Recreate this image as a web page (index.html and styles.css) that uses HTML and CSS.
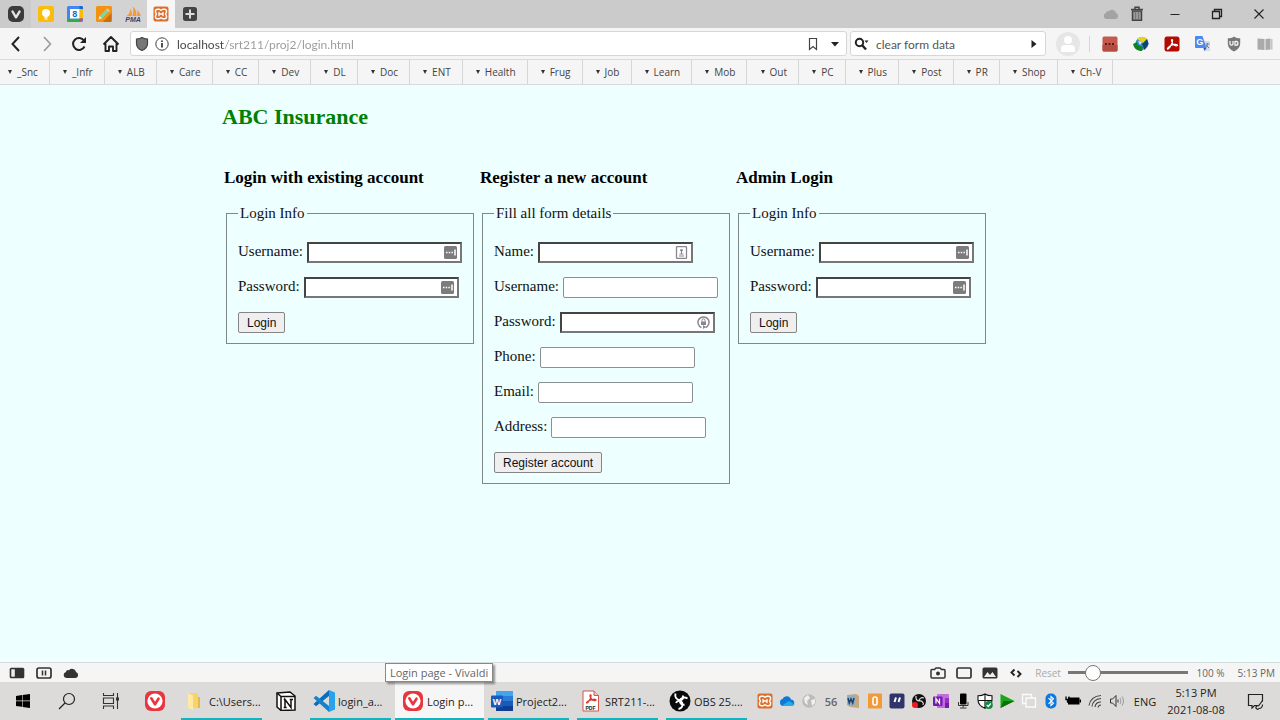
FILE: index.html
```html
<!DOCTYPE html>
<html lang="en">
  <head>
    <meta charset="UTF-8">
    <meta name="viewport" content="width=device-width, initial-scale=1.0">
    <title>Login page - Vivaldi</title>
    <link rel="stylesheet" href="styles.css">
  </head>
  <body>
    <svg class="sprite" aria-hidden="true">
      <symbol id="xampp" viewBox="0 0 16 16">
        <rect x="0.5" y="0.5" width="15" height="15" rx="2" fill="#dd6f2c"/>
        <path d="M4.500 3.200h1.500c1.200 0 1 1 2 1s.8-1 2-1h1.500c1.300 0 2 .8 2 2v1c0 .9-.9.900-.9 1.800s.9.900.9 1.800v1c0 1.200-.7 2-2 2H10c-1.200 0-1-1-2-1s-.8 1-2 1H4.500c-1.300 0-2-.8-2-2v-1c0-.9.900-.9.900-1.800s-.9-.9-.9-1.800v-1c0-1.200.7-2 2-2z" fill="none" stroke="#fff" stroke-width="1.400"/>
        <path d="M6 6.300v3.400M10 6.300v3.400M6 8h4" fill="none" stroke="#fff" stroke-width="1.300" stroke-linecap="round"/>
      </symbol>
      <symbol id="vivaldi" viewBox="0 0 22 22">
        <rect x="1" y="1" width="20" height="20" rx="6" fill="#e8363f"/>
        <circle cx="11" cy="11" r="7.600" fill="#fff"/>
        <path d="M7.300 8.300l3.700 6 3.500-5.600" fill="none" stroke="#e8363f" stroke-width="2.600" stroke-linecap="round" stroke-linejoin="round"/>
      </symbol>
      <symbol id="fill-dots" viewBox="0 0 13 13">
        <rect width="13" height="13" rx="1.500" fill="#7c7c7e"/>
        <path d="M2 6.500h1.500M4.700 6.500h1.500M7.400 6.500h1.500M11 3.500v6" stroke="#fff" stroke-width="1.500"/>
      </symbol>
      <symbol id="cloud" viewBox="0 0 16 12">
        <path d="M3.500 11a3 3 0 0 1-.6-5.900A2.500 2.500 0 0 1 6 3.200 4 4 0 0 1 13 5a3.100 3.100 0 0 1-.5 6z" fill="currentColor"/>
      </symbol>
    </svg>

    <header class="browser">
      <div class="tabbar">
        <button class="tab menu" aria-label="Vivaldi menu">
          <svg width="18" height="18" viewBox="0 0 18 18"><rect x="1" y="1" width="16" height="16" rx="5" fill="#3b3b3b"/><path d="M5.500 6.500L9 12.300l3.500-5.700" fill="none" stroke="#e4e4e4" stroke-width="2.400" stroke-linecap="round" stroke-linejoin="round"/></svg>
        </button>
        <button class="tab" aria-label="Keep">
          <svg width="16" height="16" viewBox="0 0 16 16"><rect width="16" height="16" rx="2" fill="#fbbc0a"/><circle cx="8" cy="7" r="4" fill="#fff"/><path d="M6.500 11.700h3M6.500 13h3" stroke="#fff"/></svg>
        </button>
        <button class="tab" aria-label="Calendar">
          <svg width="16" height="16" viewBox="0 0 16 16"><rect width="16" height="16" rx="1.500" fill="#4285f4"/><path d="M12.500 3H16v9.500h-3.500z" fill="#fbbc04"/><path d="M0 12.500h12.500V16H1.500A1.500 1.500 0 0 1 0 14.500z" fill="#34a853"/><path d="M12.500 12.500H16L12.500 16z" fill="#ea4335"/><path d="M12.500 0h2A1.500 1.500 0 0 1 16 1.500V3h-3.500z" fill="#1967d2"/><rect x="3" y="3" width="9.500" height="9.500" fill="#fff"/><text x="7.800" y="11" text-anchor="middle" class="glyph blue">8</text></svg>
        </button>
        <button class="tab" aria-label="Editor">
          <svg width="16" height="16" viewBox="0 0 16 16"><rect width="16" height="16" rx="1.500" fill="#f3920f"/><path d="M7 16l8.500-9V14.500A1.500 1.500 0 0 1 14 16z" fill="#c96f05"/><path d="M2.500 13.500l1-3.500L10 3.500l2.500 2.500L6 12.500z" fill="#7bd6a8"/><path d="M10 3.500l1.500-1.300 2.500 2.500L12.500 6z" fill="#e9bcc0"/><path d="M2.500 13.500l1-3.500L6 12.500z" fill="#f4e2c0"/></svg>
        </button>
        <button class="tab" aria-label="phpMyAdmin">
          <svg width="18" height="16" viewBox="0 0 18 16"><path d="M2.500 10C5 8.500 6 6.500 6.500 3c1.500 2 1.700 5 1.200 7zM8.200 10C9.500 7 9.700 4 8.800.5c3 2.500 4 6 3.700 9.500zM13 10c.6-2 .5-4-.3-6 2.300 1.500 3.600 3.500 4 6z" fill="#f4983a"/><text x="9" y="15.500" text-anchor="middle" class="glyph pma">PMA</text></svg>
        </button>
        <button class="tab active" aria-label="Login page">
          <svg width="16" height="16"><use href="#xampp"/></svg>
        </button>
        <button class="tab" aria-label="New tab">
          <svg width="16" height="16" viewBox="0 0 16 16"><rect x="1" y="1" width="14" height="14" rx="2.500" fill="#444"/><path d="M8 3.500v9M3.500 8h9" stroke="#ddd" stroke-width="2"/></svg>
        </button>
        <div class="window-tools">
          <button class="tool dim" aria-label="Synced tabs"><svg width="16" height="12"><use href="#cloud"/></svg></button>
          <button class="tool" aria-label="Closed tabs"><svg width="14" height="16" viewBox="0 0 14 16"><path d="M1 3.500h12M5 3V1.200h4V3" fill="none" stroke="#444" stroke-width="1.500"/><path d="M2.500 5h9v9.200h-9z" fill="#999" stroke="#444" stroke-width="1.500"/><path d="M5.500 6v7M8.500 6v7" stroke="#777"/></svg></button>
          <button class="caption" aria-label="Minimise"><svg width="12" height="12" viewBox="0 0 12 12"><path d="M1.500 6.500h9" stroke="#222"/></svg></button>
          <button class="caption" aria-label="Restore"><svg width="12" height="12" viewBox="0 0 12 12"><path d="M1.500 3.500h7v7h-7zM3.500 3.500v-2h7v7h-2" fill="none" stroke="#222" stroke-width="1.300"/></svg></button>
          <button class="caption" aria-label="Close"><svg width="12" height="12" viewBox="0 0 12 12"><path d="M1.500 1.500l9 9M10.500 1.500l-9 9" stroke="#222" stroke-width="1.100"/></svg></button>
        </div>
      </div>

      <div class="toolbar">
        <div class="nav">
          <button aria-label="Back"><svg width="18" height="18" viewBox="0 0 18 18"><path d="M12 2L5.500 9l6.500 7" fill="none" stroke="#222" stroke-width="2"/></svg></button>
          <button aria-label="Forward"><svg width="18" height="18" viewBox="0 0 18 18"><path d="M6 2l6.500 7L6 16" fill="none" stroke="#999" stroke-width="1.600"/></svg></button>
          <button aria-label="Reload"><svg width="18" height="18" viewBox="0 0 18 18"><path d="M14.500 11.500A6 6 0 1 1 14 5.500" fill="none" stroke="#222" stroke-width="2"/><path d="M16 2v6h-6z" fill="#222"/></svg></button>
          <button aria-label="Home"><svg width="18" height="18" viewBox="0 0 18 18"><path d="M1.500 9.500L9 2l7.500 7.500M3.500 8.500V16H7v-4.500h4V16h3.500V8.500" fill="none" stroke="#222" stroke-width="1.900" stroke-linejoin="round"/></svg></button>
        </div>
        <div class="box address">
          <svg width="14" height="16" viewBox="0 0 14 16"><path d="M7 1.500C5.500 2.500 3.500 3 1.500 3v4.500c0 3 2 5.500 5.500 7 3.500-1.500 5.500-4 5.500-7V3c-2 0-4-.5-5.500-1.500z" fill="#777" stroke="#444" stroke-width="1.200"/></svg>
          <svg width="14" height="14" viewBox="0 0 14 14"><circle cx="7" cy="7" r="6.200" fill="none" stroke="#444"/><path d="M7 6v4.500M7 3.500v1.500" stroke="#222" stroke-width="1.600"/></svg>
          <input class="url" type="text" aria-label="Address" value="localhost/srt211/proj2/login.html">
          <button aria-label="Bookmark"><svg width="10" height="14" viewBox="0 0 10 14"><path d="M1.500 1.500h7v11L5 9.500l-3.500 3z" fill="none" stroke="#444" stroke-width="1.200"/></svg></button>
          <button aria-label="History"><svg width="8" height="6" viewBox="0 0 8 6"><path d="M0 1h8L4 5.500z" fill="#222"/></svg></button>
        </div>
        <div class="box search">
          <svg width="16" height="14" viewBox="0 0 16 14"><circle cx="5.500" cy="5.500" r="3.700" fill="none" stroke="#222" stroke-width="2"/><path d="M8 8l4 4.500" stroke="#222" stroke-width="2.400"/><path d="M10.500 3.500h4l-2 2.500z" fill="#222"/></svg>
          <input type="text" aria-label="Search" value="clear form data">
          <button aria-label="Search"><svg width="6" height="8" viewBox="0 0 6 8"><path d="M.5 0v8L5.500 4z" fill="#222"/></svg></button>
        </div>
        <button class="avatar" aria-label="Profile"><svg width="24" height="24" viewBox="0 0 24 24"><circle cx="12" cy="12" r="12" fill="#e6e6e6"/><circle cx="12" cy="8" r="4" fill="#fff"/><path d="M5 20v-3a4 4 0 0 1 4-4h6a4 4 0 0 1 4 4v3z" fill="#fff"/></svg></button>
        <div class="extensions">
          <button aria-label="Password manager"><svg width="16" height="16" viewBox="0 0 16 16"><rect x="0.500" y="0.500" width="15" height="15" rx="1.500" fill="#c5594b"/><path d="M.5 9h15v5a1.500 1.500 0 0 1-1.500 1.500H2A1.500 1.500 0 0 1 .5 14z" fill="#b54c40"/><path d="M3 8h2M6.500 8h2M10 8h2" stroke="#5a1c18" stroke-width="2"/></svg></button>
          <button aria-label="Download manager"><svg width="16" height="16" viewBox="0 0 16 16"><circle cx="9" cy="7.500" r="6.500" fill="#2f8fdc"/><path d="M4 3c3-3.500 9-3 11 1l-4 3.500L7 5z" fill="#e3d22a"/><path d="M9 8l5-5 1.500 5-4 6z" fill="#14406f"/><path d="M5 5l4 1-2 3z" fill="#d8ecf7"/><path d="M0 8l4-2 1 3 5 2-1 4c-5 0-8-2.500-9-7z" fill="#14801f"/></svg></button>
          <button aria-label="Acrobat"><svg width="16" height="16" viewBox="0 0 16 16"><rect x="0.500" y="0.500" width="15" height="15" rx="2.500" fill="#b30b00"/><path d="M8 3.500c-1.300 0 .3 4 1.500 5.200 1.200 1.200 4 1.600 4 .6 0-1.500-5-1-7.500.7-1.700 1.200-3 2.700-2.500 3C4.800 13.700 9 7 8.600 4.200 8.500 3.700 8.300 3.500 8 3.500z" fill="none" stroke="#fff" stroke-width="1.200"/></svg></button>
          <button aria-label="Translate"><svg width="16" height="16" viewBox="0 0 16 16"><path d="M7 5h8v10H9z" fill="#d8dce3"/><path d="M1 0h6.500l4 12H1a1 1 0 0 1-1-1V1a1 1 0 0 1 1-1z" fill="#4a8af4"/><path d="M8.500 12h3L9.500 15z" fill="#2a56c6"/><path d="M10.500 8h4M12.500 7v1c0 2-1 3-2 4M11 9l3 3" fill="none" stroke="#6f8192"/><text x="4.800" y="8.500" text-anchor="middle" class="glyph white">G</text></svg></button>
          <button aria-label="Ad blocker"><svg width="16" height="16" viewBox="0 0 16 16"><path d="M8 .5C6 2 4 2.300 1.800 2.300V7c0 4 2.200 6.500 6.200 8.500C12 13.500 14.200 11 14.200 7V2.300C12 2.300 10 2 8 .5z" fill="#787878"/><path d="M4 5v3c0 1.600 3 1.600 3 0V5M9 5v4.200h1c2.600 0 2.600-3.900 0-3.900H9" fill="none" stroke="#fff" stroke-width="1.200"/></svg></button>
          <button aria-label="Reader"><svg width="16" height="16" viewBox="0 0 16 16"><path d="M.5 2.500L7.500 3v11l-7-.5zM8.500 3l5-.5v11l-5 .5z" fill="#aaa"/><path d="M14 3h1.500v10.500H14z" fill="#c4c4c4"/></svg></button>
        </div>
      </div>

      <nav class="bookmarks" aria-label="Bookmarks">
        <div class="folders">
          <button>_Snc</button>
          <button>_Infr</button>
          <button>ALB</button>
          <button>Care</button>
          <button>CC</button>
          <button>Dev</button>
          <button>DL</button>
          <button>Doc</button>
          <button>ENT</button>
          <button>Health</button>
          <button>Frug</button>
          <button>Job</button>
          <button>Learn</button>
          <button>Mob</button>
          <button>Out</button>
          <button>PC</button>
          <button>Plus</button>
          <button>Post</button>
          <button>PR</button>
          <button>Shop</button>
          <button>Ch-V</button>
        </div>
      </nav>
    </header>

    <main class="page">
      <div class="container">
        <h1>ABC Insurance</h1>
        <div class="columns">
          <section>
            <h2>Login with existing account</h2>
            <form>
              <fieldset>
                <legend>Login Info</legend>
                <div class="field">
                  <label for="user">Username:</label>
                  <div class="control required"><input type="text" id="user"><svg width="13" height="13"><use href="#fill-dots"/></svg></div>
                </div>
                <div class="field">
                  <label for="pass">Password:</label>
                  <div class="control required"><input type="password" id="pass"><svg width="13" height="13"><use href="#fill-dots"/></svg></div>
                </div>
                <button type="submit">Login</button>
              </fieldset>
            </form>
          </section>

          <section>
            <h2>Register a new account</h2>
            <form>
              <fieldset>
                <legend>Fill all form details</legend>
                <div class="field">
                  <label for="name">Name:</label>
                  <div class="control required"><input type="text" id="name"><svg width="13" height="13" viewBox="0 0 13 13"><rect x="1.500" y="0.500" width="10" height="12" rx="1" fill="#fff" stroke="#8a8590" stroke-width="1.300"/><circle cx="6.500" cy="4.200" r="1.300" fill="#8a8590"/><path d="M6.500 5v3M4.500 8h4M4 10h5" stroke="#8a8590"/></svg></div>
                </div>
                <div class="field">
                  <label for="new-user">Username:</label>
                  <div class="control"><input type="text" id="new-user"></div>
                </div>
                <div class="field">
                  <label for="new-pass">Password:</label>
                  <div class="control required"><input type="password" id="new-pass"><svg width="13" height="13" viewBox="0 0 13 13"><path d="M4.500 11.500a5.500 5.500 0 1 1 4 0" fill="none" stroke="#8a8590" stroke-width="1.500"/><path d="M6 9v4l3-2z" fill="#8a8590"/><rect x="4" y="5.500" width="5" height="3.500" fill="#8a8590"/><path d="M5 5.500V4.300a1.500 1.500 0 0 1 3 0v1.200" fill="none" stroke="#8a8590"/></svg></div>
                </div>
                <div class="field">
                  <label for="phone">Phone:</label>
                  <div class="control"><input type="tel" id="phone"></div>
                </div>
                <div class="field">
                  <label for="email">Email:</label>
                  <div class="control"><input type="email" id="email"></div>
                </div>
                <div class="field">
                  <label for="address">Address:</label>
                  <div class="control"><input type="text" id="address"></div>
                </div>
                <button type="submit">Register account</button>
              </fieldset>
            </form>
          </section>

          <section>
            <h2>Admin Login</h2>
            <form>
              <fieldset>
                <legend>Login Info</legend>
                <div class="field">
                  <label for="admin-user">Username:</label>
                  <div class="control required"><input type="text" id="admin-user"><svg width="13" height="13"><use href="#fill-dots"/></svg></div>
                </div>
                <div class="field">
                  <label for="admin-pass">Password:</label>
                  <div class="control required"><input type="password" id="admin-pass"><svg width="13" height="13"><use href="#fill-dots"/></svg></div>
                </div>
                <button type="submit">Login</button>
              </fieldset>
            </form>
          </section>
        </div>
      </div>
    </main>

    <footer>
      <div class="statusbar">
        <button aria-label="Panel"><svg width="16" height="12" viewBox="0 0 16 12"><rect x="0.700" y="0.700" width="14.600" height="10.600" rx="1.500" fill="#333"/><rect x="2.300" y="2.300" width="3.500" height="7.400" fill="#eee"/></svg></button>
        <button aria-label="Break mode"><svg width="16" height="12" viewBox="0 0 16 12"><rect x="1" y="1" width="14" height="10" rx="2" fill="none" stroke="#333" stroke-width="1.700"/><path d="M6.500 3.500v5M9.500 3.500v5" stroke="#333" stroke-width="1.500"/></svg></button>
        <button aria-label="Sync"><svg width="16" height="12"><use href="#cloud"/></svg></button>
        <div class="status-right">
          <button aria-label="Capture page"><svg width="16" height="12" viewBox="0 0 16 12"><path d="M1 3.500a1 1 0 0 1 1-1h2.500L6 1h4l1.500 1.500H14a1 1 0 0 1 1 1V10a1 1 0 0 1-1 1H2a1 1 0 0 1-1-1z" fill="none" stroke="#333" stroke-width="1.500"/><circle cx="8" cy="6.500" r="2" fill="#333"/></svg></button>
          <button aria-label="Tiling"><svg width="16" height="12" viewBox="0 0 16 12"><rect x="1" y="1" width="14" height="10" rx="1.500" fill="none" stroke="#333" stroke-width="1.700"/></svg></button>
          <button aria-label="Images"><svg width="16" height="12" viewBox="0 0 16 12"><rect x="0.500" y="0.500" width="15" height="11" rx="1.500" fill="#333"/><path d="M2 10l3.500-5L8 8l2.500-3L14 10z" fill="#eee"/></svg></button>
          <button aria-label="Page actions"><svg width="16" height="12" viewBox="0 0 16 12"><path d="M6.500 2.500L3.500 5.500l3 3M9.500 4l3 3-3 3" fill="none" stroke="#222" stroke-width="1.900"/></svg></button>
          <button class="reset">Reset</button>
          <input class="zoom" type="range" aria-label="Page zoom" min="20" max="500" value="100">
          <span class="percent">100 %</span>
          <span>5:13 PM</span>
        </div>
      </div>

      <div class="taskbar">
        <button class="pin" aria-label="Start"><svg width="14" height="14" viewBox="0 0 14 14"><path d="M0 2l6-.9v5.500H0zM6.600 1L14 0v6.600H6.600zM0 7.300h6v5.500l-6-.8zM6.600 7.300H14V14l-7.400-1z" fill="#000"/></svg></button>
        <button class="pin" aria-label="Search"><svg width="18" height="18" viewBox="0 0 18 18"><circle cx="11" cy="7" r="5.500" fill="none" stroke="#222" stroke-width="1.200"/><path d="M7 11l-6 6" stroke="#222" stroke-width="1.300"/></svg></button>
        <button class="pin" aria-label="Task view"><svg width="18" height="16" viewBox="0 0 18 16"><path d="M1.500 0v2.500h10V0M1.500 16v-3h10v3M1.500 5h10v5.500h-10zM15.500 0v16" fill="none" stroke="#333" stroke-width="1.100"/><path d="M14 4.500h3v3h-3z" fill="#333"/></svg></button>
        <button class="pin" aria-label="Vivaldi"><svg width="22" height="22"><use href="#vivaldi"/></svg></button>
        <button class="task"><svg width="22" height="22" viewBox="0 0 22 22"><path d="M4 3h10v15H4z" fill="#f6d36b"/><path d="M4 3l5 2.500V20l-5-2z" fill="#ffe9a3"/><path d="M14 7h2v11h-2z" fill="#e6b84a"/></svg><span>C:\Users...</span></button>
        <button class="pin notion" aria-label="Notion"><svg width="20" height="20" viewBox="0 0 20 20"><path d="M1 2l13-1 5 4v14l-14 .5L1 16z" fill="#fff" stroke="#111" stroke-width="1.500"/><path d="M1 2l4 3.500h14M5 5.500v14" fill="none" stroke="#111" stroke-width="1.500"/><path d="M9 16.500V8.500l6 8v-8M7.700 8.500h2M13.700 8.500H17M7.700 16.500h3" fill="none" stroke="#111" stroke-width="1.500"/></svg></button>
        <button class="task"><svg width="22" height="22" viewBox="0 0 22 22"><path d="M16 0l6 2.500v17L16 22z" fill="#2aa1ec"/><path d="M16 0v6L3 16.200.5 14z" fill="#0a6ebd"/><path d="M16 22v-6L3 5.800.5 8z" fill="#1583cc"/></svg><span>login_a...</span></button>
        <button class="task current"><svg width="22" height="22"><use href="#vivaldi"/></svg><span>Login p...</span><span class="tooltip" role="tooltip">Login page - Vivaldi</span></button>
        <button class="task"><svg width="22" height="22" viewBox="0 0 22 22"><rect x="5" y="1" width="17" height="20" rx="1" fill="#2b7cd3"/><path d="M5 1h17v5H5z" fill="#41a5ee"/><path d="M5 11h17v5H5z" fill="#185abd"/><path d="M5 16h17v5H5z" fill="#103f91"/><rect y="5.500" width="12" height="12" rx="1" fill="#185abd"/><text x="6" y="14.500" text-anchor="middle" class="glyph white">W</text></svg><span>Project2...</span></button>
        <button class="task"><svg width="22" height="22" viewBox="0 0 22 22"><path d="M3 1h11l4.500 4.500V21H3z" fill="#fff" stroke="#d9534a"/><path d="M14 1v4.500h4.500" fill="#f3c9c5" stroke="#d9534a"/><path d="M10.500 5c-1.500 0 .5 4 1.800 4.900 1.200.8 3.700 1 3.700.1 0-1.300-4.500-.8-6.800.5-1.700 1-3 2.200-2.500 2.500C8 13.500 11.500 7.500 11 5.500c0-.3-.2-.5-.5-.5z" fill="none" stroke="#d93a30" stroke-width="1.300"/><text x="10.500" y="19.500" text-anchor="middle" class="glyph pdf">PDF</text></svg><span>SRT211-...</span></button>
        <button class="task"><svg width="22" height="22" viewBox="0 0 22 22"><circle cx="11" cy="11" r="10.500" fill="#0a0a0a"/><path d="M6.500 3.500C5.500 7 7.500 10 11 10c3 0 4-2.500 2.500-4.500M18.500 8.500c-3-2-7-1-7.500 2.500-.3 2.500 2 4.500 4.500 3.500M9.500 19c3.500-.5 5-4 3.500-6.500-1.500-2.500-5-2-6 .5" fill="none" stroke="#fff" stroke-width="1.900"/></svg><span>OBS 25....</span></button>

        <div class="tray">
          <button aria-label="XAMPP"><svg width="16" height="16"><use href="#xampp"/></svg></button>
          <button aria-label="OneDrive"><svg width="16" height="16" viewBox="0 0 16 16"><path d="M4 13a3.600 3.600 0 0 1-.5-7A4.500 4.500 0 0 1 12 6.500a3.300 3.300 0 0 1 .7 6.500z" fill="#0c7bd8"/><path d="M3 12.500L10 8l5.500 3.500A3 3 0 0 1 13 13H4.500z" fill="#28a8ea"/></svg></button>
          <button aria-label="Network proxy"><svg width="16" height="16" viewBox="0 0 16 16"><circle cx="8" cy="8" r="6.800" fill="#bcbcbc"/><path d="M3 5l4-3 2 3-3 3 1 4-3-2zM10 7l4-1v4l-3 3z" fill="#efefef"/></svg></button>
          <button class="temp">56</button>
          <button aria-label="Dictionary"><svg width="16" height="16" viewBox="0 0 16 16"><path d="M2 2l9-1 3 2v12l-9-1-3-2z" fill="#c7a77b"/><path d="M2 2l8 1v10l-8-1z" fill="#8fb0c5"/><path d="M3 5l1.300 5L6 6l1.700 4L9 5" fill="none" stroke="#1e3f63" stroke-width="1.500"/></svg></button>
          <button aria-label="Counter"><svg width="16" height="16" viewBox="0 0 16 16"><rect x="1" y="0.500" width="14" height="15" rx="1" fill="#f29a38"/><rect x="6" y="4" width="4" height="8" rx="1.700" fill="none" stroke="#fff" stroke-width="1.600"/></svg></button>
          <button aria-label="Quotes"><svg width="16" height="16" viewBox="0 0 16 16"><rect x="0.500" y="0.500" width="15" height="15" rx="2" fill="#30346b"/><path d="M7 4.500L5.500 9M11 4.500L9.500 9" stroke="#fff" stroke-width="2"/></svg></button>
          <button aria-label="OBS"><svg width="16" height="16" viewBox="0 0 16 16"><circle cx="8" cy="8" r="7" fill="#111"/><path d="M5 3c-.5 3 1 5 3 5M13 5c-3-1-5 1-5 3M12 12c1-2-1-5-4-4" fill="none" stroke="#ddd" stroke-width="1.200"/><circle cx="4" cy="12" r="3" fill="#f01818"/></svg></button>
          <button aria-label="OneNote"><svg width="16" height="16" viewBox="0 0 16 16"><rect x="4" y="1" width="12" height="14" rx="1" fill="#c06be0"/><path d="M12 5h4v5h-4z" fill="#9332bf"/><path d="M12 10h4v5h-4z" fill="#7719aa"/><rect y="3.500" width="9.500" height="9.500" rx="1" fill="#7719aa"/><path d="M3 10.500v-5l3.500 5v-5" fill="none" stroke="#fff" stroke-width="1.300"/></svg></button>
          <button aria-label="Microphone"><svg width="16" height="16" viewBox="0 0 16 16"><rect x="5" y="0.500" width="6.500" height="11" rx="1" fill="#000"/><path d="M3.500 9v3.500h9.500V9M8.200 12v2.500M5 15h6.500" fill="none" stroke="#333"/></svg></button>
          <button aria-label="Security"><svg width="16" height="16" viewBox="0 0 16 16"><path d="M8 1C6 2.300 4 2.800 1 2.800V7c0 4 2.500 6.500 7 8.300 4.500-1.800 7-4.300 7-8.300V2.800C12 2.800 10 2.300 8 1zM8 1v14M1 7.500h14" fill="#fff" stroke="#111" stroke-width="1.100"/><circle cx="11.800" cy="12" r="4" fill="#0f8a43"/><path d="M9.800 12l1.500 1.500 2.500-3" fill="none" stroke="#fff" stroke-width="1.200"/></svg></button>
          <button aria-label="Player"><svg width="16" height="16" viewBox="0 0 16 16"><path d="M1.500 1L15.500 8l-14 7z" fill="#16a816"/><path d="M1.500 15l3-7h11z" fill="#0b6f0e"/></svg></button>
          <button aria-label="Windows"><svg width="16" height="16" viewBox="0 0 16 16"><path d="M5 5h9.500v9H5zM4.500 10.500H1.500v-9h9V4.500" fill="none" stroke="#fbfbfb" stroke-width="1.300"/></svg></button>
          <button aria-label="Bluetooth"><svg width="16" height="16" viewBox="0 0 16 16"><rect x="2.500" y="0.500" width="11" height="15" rx="5" fill="#0a78e0"/><path d="M5.500 5.200l5 5L8 12.500v-9l2.500 2.300-5 5" fill="none" stroke="#fff" stroke-width="1.100"/></svg></button>
          <button aria-label="Battery"><svg width="16" height="16" viewBox="0 0 16 16"><rect x="3" y="4.500" width="11.500" height="7" fill="#000"/><path d="M14.500 6.500H16v3h-1.500z" fill="#000"/><path d="M1 3.500v3h3v-3M2.500 6.500V9H5" fill="none" stroke="#000" stroke-width="1.300"/></svg></button>
          <button aria-label="Wi-Fi"><svg width="16" height="16" viewBox="0 0 16 16"><path d="M2 12.500C3 7 7 3 14 2.500M5 13.500C5.500 9 9 6 14 5.500M8 14c.5-3.500 3-5 6-5M11 14.500c.3-1.500 1.500-2.500 3-2.500" fill="none" stroke="#444" stroke-width="1.100"/></svg></button>
          <button aria-label="Volume"><svg width="16" height="16" viewBox="0 0 16 16"><path d="M1.500 6h2L7 2.500v11L3.500 10h-2zM9 6.500v3" fill="none" stroke="#333"/><path d="M11 5c1 2 1 4 0 6M13 3.500c2 3 2 6 0 9" fill="none" stroke="#999"/></svg></button>
        </div>
        <button class="lang">ENG</button>
        <button class="clock"><span>5:13 PM</span><span>2021-08-08</span></button>
        <button class="notify" aria-label="Notifications"><svg width="17" height="17" viewBox="0 0 17 17"><path d="M10 12.500H7.500L5 15v-2.500H1.500v-11h14v7" fill="none" stroke="#222" stroke-width="1.200"/><path d="M15.500 7.500l-4 5.500M11.500 13a1.700 1.700 0 1 0 .5 2.500c2 0 3.500-2 3.500-4" fill="none" stroke="#222" stroke-width="1.200"/></svg></button>
      </div>
    </footer>
  </body>
</html>
```

FILE: styles.css
```css
* {
  box-sizing: border-box;
}
body {
  display: flex;
  flex-direction: column;
  min-height: 100vh;
  margin: 0;
  background-color: #edffff;
  color: #222;
  font-family: "Open Sans", "Noto Sans", sans-serif;
  font-size: 11px;
}
button,
input {
  font: inherit;
  color: inherit;
}
svg {
  display: block;
  flex: none;
}
.sprite {
  position: absolute;
  width: 0;
  height: 0;
}

/* Browser and system chrome buttons carry no box of their own */
.browser button,
footer button {
  display: flex;
  align-items: center;
  justify-content: center;
  padding: 0;
  border: none;
  background: none;
  white-space: nowrap;
}
.glyph {
  font-family: "Liberation Sans", sans-serif;
  font-size: 9px;
  font-weight: bold;
}
.blue {
  fill: #1967d2;
}
.white {
  fill: #fff;
}
.pma {
  font-size: 7px;
  font-style: italic;
  fill: #3f4273;
}
.pdf {
  font-size: 5px;
  fill: #222;
}

.tabbar {
  display: flex;
  height: 28px;
  background-color: #cbcbcb;
}
.tabbar .tab {
  width: 29px;
  background-color: #d3d3d3;
}
.tabbar .menu {
  width: 31px;
}
.tabbar .menu,
.tabbar .tab:nth-child(7) {
  background-color: transparent;
}
.tabbar .active {
  width: 28px;
  background-color: #f6f6f6;
}
.window-tools {
  display: flex;
  margin-left: auto;
}
.tool {
  width: 26px;
}
.tool + .caption {
  margin-left: 4px;
}
.window-tools .dim {
  color: #a3a3a3;
}
.caption {
  width: 42px;
}

.toolbar {
  display: flex;
  align-items: center;
  gap: 3px;
  height: 32px;
  background-color: #f5f5f5;
  border-bottom: 1px solid #dadada;
}
.nav {
  display: flex;
}
.nav button {
  width: 32px;
}
.nav button:first-child {
  width: 31px;
}
.box {
  display: flex;
  align-items: center;
  gap: 6px;
  height: 25px;
  padding: 0 6px;
  background-color: #fff;
  border: 1px solid #d6d6d6;
  border-radius: 3px;
  font-family: Lato, "Open Sans", sans-serif;
  font-size: 12px;
}
.box input {
  flex: 1;
  min-width: 0;
  padding: 2px 0 0;
  border: none;
  outline: none;
  background-color: transparent;
  color: #555;
}
.address {
  flex: 1;
  padding: 0 3px 0 4px;
}
.address button {
  width: 16px;
}
/* The host part of the address is darker than the path */
.box .url {
  padding-left: 2px;
  color: #8a8a8a;
  background-image: linear-gradient(90deg, #444 50px, #999 50px);
  background-clip: text;
  -webkit-background-clip: text;
  -webkit-text-fill-color: transparent;
}
.search {
  width: 196px;
  padding: 0 8px 0 3px;
}
.avatar {
  width: 37px;
}
.extensions {
  display: flex;
  border-left: 1px solid #d6d6d6;
  padding-left: 4px;
}
.extensions button {
  width: 31px;
}

.bookmarks {
  height: 25px;
  background-color: #f5f5f5;
  border-bottom: 1px solid #dadada;
  overflow: hidden;
  color: #444;
  font-size: 10px;
}
.folders {
  display: flex;
  width: 87%;
  height: 100%;
}
.folders button {
  flex: 1 0 auto;
}
.browser .folders button {
  gap: 5px;
  padding: 0 11px 0 13px;
  border-right: 1px solid #d6d6d6;
}
.browser .folders button:first-child {
  padding-left: 8px;
}
.folders button::before {
  content: "";
  border: 2px solid transparent;
  border-top: 4px solid #333;
  border-bottom: none;
}

.page {
  flex: 1;
  color: #111;
  font-family: "Liberation Serif", "Times New Roman", serif;
  font-size: 15px;
}
.container {
  width: 60%;
  min-width: 770px;
  margin-left: 222px;
}
h1 {
  margin: 19px 0 38px;
  color: green;
  font-size: 22px;
  line-height: 26px;
}
h2 {
  margin: 0 0 16px;
  color: #000;
  font-size: 17px;
  line-height: 20px;
}
.columns {
  display: grid;
  grid-template-columns: repeat(3, 1fr);
  align-items: start;
  padding-left: 2px;
}
fieldset {
  margin: 0 6px 0 2px;
  padding: 20px 11px 10px;
  border: 1px solid #808989;
}
legend {
  padding: 0 2px;
  line-height: 18px;
}
.field {
  display: flex;
  align-items: flex-start;
  gap: 4px;
  margin-bottom: 14px;
}
.field label {
  line-height: 18px;
}
.control {
  position: relative;
}
.control input {
  display: block;
  width: 155px;
  height: 21px;
  padding: 1px 20px 1px 3px;
  border: 1px solid #8b9191;
  border-radius: 2px;
  background-color: #fff;
  font-family: "Liberation Sans", Arial, sans-serif;
  font-size: 12px;
}
.required input {
  border: 2px solid #777;
  border-top-color: #444;
  border-left-color: #444;
  border-radius: 0;
}
.control svg {
  position: absolute;
  top: 4px;
  right: 5px;
}
fieldset button {
  display: block;
  height: 21px;
  padding: 0 8px;
  border: 1px solid #858585;
  border-radius: 2px;
  background-color: #efefef;
  font-family: "Liberation Sans", Arial, sans-serif;
  font-size: 12px;
}

.statusbar {
  display: flex;
  align-items: center;
  height: 20px;
  padding: 0 5px 0 3px;
  background-color: #f5f5f5;
  border-top: 1px solid #d4dcdc;
  color: #666;
  font-size: 10px;
}
.statusbar button {
  width: 27px;
  color: #333;
}
.status-right {
  display: flex;
  align-items: center;
  margin-left: auto;
}
.status-right button {
  width: 26px;
}
.statusbar .reset {
  width: 39px;
  color: #aaa;
}
.percent {
  padding: 0 13px 0 9px;
}
.zoom {
  width: 120px;
  height: 16px;
  margin: 0;
  appearance: none;
  background: none;
}
.zoom::-webkit-slider-runnable-track {
  height: 3px;
  background-color: #777;
}
.zoom::-webkit-slider-thumb {
  appearance: none;
  width: 16px;
  height: 16px;
  margin-top: -6px;
  border: 1px solid #777;
  border-radius: 50%;
  background-color: #fff;
}

.taskbar {
  display: flex;
  height: 38px;
  padding-left: 1px;
  background-color: #dcdbda;
}
.pin {
  width: 44px;
}
.taskbar .notion {
  width: 40px;
}
.taskbar .task {
  position: relative;
  justify-content: flex-start;
  gap: 3px;
  width: 89px;
  padding: 0 5px 0 7px;
}
.task::after {
  content: "";
  position: absolute;
  right: 4px;
  bottom: 0;
  left: 4px;
  height: 2px;
  background-color: #19b1bb;
}
.taskbar .current {
  background-color: #f6f6f6;
}
.current::after {
  right: 0;
  left: 0;
}
.tooltip {
  position: absolute;
  bottom: 38px;
  left: -10px;
  padding: 0 4px;
  border: 1px solid #888;
  background-color: #fff;
  box-shadow: 2px 2px 2px rgba(0, 0, 0, 0.4);
  color: #666;
  line-height: 17px;
}
.tray {
  display: flex;
  margin-left: auto;
}
.tray button {
  width: 22px;
}
.tray .temp {
  color: #666;
  font-weight: 600;
}
.lang {
  width: 34px;
}
footer .clock {
  flex-direction: column;
  width: 68px;
  line-height: 17px;
}
.notify {
  width: 50px;
}
```
